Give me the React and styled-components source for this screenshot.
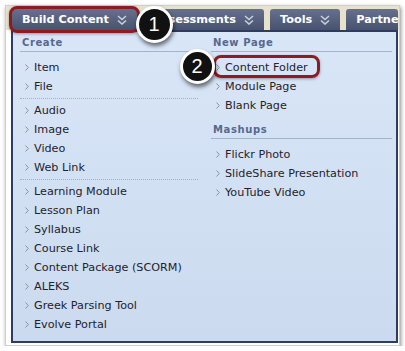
import React from "react";
import styled, { createGlobalStyle, css } from "styled-components";

const GlobalStyle = createGlobalStyle`
  body {
    margin: 0;
    background: #fff;
  }
`;

const Frame = styled.div`
  box-sizing: border-box;
  margin: 5px 0 0 5px;
  width: 395px;
  height: 341px;
  border: 1px solid #cfcfcf;
  background: #fff;
  box-shadow: 1px 2px 4px rgba(0, 0, 0, 0.45);
  display: flex;
  flex-direction: column;
  font-family: "DejaVu Sans", "Liberation Sans", sans-serif;
`;

const TabBar = styled.div`
  height: 24px;
  flex: none;
  display: flex;
  align-items: flex-end;
  gap: 6px;
  padding: 0 1px 0 6px;
  background: #e6e2cb;
`;

const highlight = css`
  &::after {
    content: "";
    position: absolute;
    border: 3px solid #8c1c22;
    border-radius: 8px;
    box-shadow: 0 1px 3px rgba(0, 0, 0, 0.35);
    z-index: 1;
    pointer-events: none;
  }
`;

const Tab = styled.div`
  position: relative;
  display: flex;
  align-items: center;
  gap: 8px;
  height: 21px;
  padding: 0 10px;
  flex: ${(p) => (p.$clip ? "1 1 auto" : "none")};
  min-width: 0;
  overflow: ${(p) => (p.$clip ? "hidden" : "visible")};
  background: linear-gradient(#66718d, #485270);
  border-radius: 3px 3px 0 0;
  color: #fff;
  font-weight: bold;
  font-size: 11.3px;
  white-space: nowrap;
  ${(p) =>
    p.$active &&
    css`
      ${highlight}
      &::after {
        inset: -3px -3px -3px -3px;
      }
    `}
`;

const Panel = styled.div`
  flex: 1;
  margin: 0 1px 2px 5px;
  border: 2px solid #2f3c62;
  background: linear-gradient(#d9e6f8, #cbdaee);
  display: grid;
  grid-template-columns: 178px 181px;
  column-gap: 13px;
  align-content: start;
  padding-left: 7px;
`;

const Column = styled.div`
  display: flex;
  flex-direction: column;
`;

const Header = styled.div`
  padding: 4px 0 1px 2px;
  margin-top: ${(p) => (p.$spaced ? "4px" : "0")};
  line-height: 14px;
  font-size: 10px;
  font-weight: bold;
  letter-spacing: 0.6px;
  color: #56698f;
  border-bottom: 1px solid #a2b3cb;
`;

const List = styled.div`
  display: flex;
  flex-direction: column;
  padding-top: 6px;
`;

const Separator = styled.div`
  margin: 2px 0;
  border-top: 1px dotted #a3b1c6;
`;

const Item = styled.div`
  position: relative;
  display: flex;
  align-items: center;
  gap: 5px;
  width: fit-content;
  height: 19px;
  padding-left: 5px;
  font-size: 11.2px;
  color: #1f232b;
  white-space: nowrap;
  ${(p) =>
    p.$active &&
    css`
      ${highlight}
      &::after {
        inset: -3px -12px -1px 2px;
      }
    `}
`;

const Badge = styled.span`
  position: absolute;
  left: ${(p) => p.$x}px;
  top: ${(p) => p.$y}px;
  width: ${(p) => p.$size}px;
  height: ${(p) => p.$size}px;
  box-sizing: border-box;
  border-radius: 50%;
  background: #111;
  border: 3px solid #fff;
  box-shadow: 1px 3px 4px rgba(0, 0, 0, 0.55);
  display: flex;
  align-items: center;
  justify-content: center;
  color: #fff;
  font-family: "Liberation Sans", Arial, sans-serif;
  font-weight: normal;
  font-size: 20px;
  z-index: 2;
`;

const DoubleChevron = () => (
  <svg width="10" height="10" viewBox="0 0 10 10">
    <g fill="none" stroke="#c9cfdc" strokeWidth="1.6">
      <polyline points="1,1 5,4.5 9,1" />
      <polyline points="1,5.5 5,9 9,5.5" />
    </g>
  </svg>
);

const Arrow = () => (
  <svg width="4" height="7" viewBox="0 0 4 7">
    <polyline points="0.5,0.5 3.3,3.5 0.5,6.5" fill="none" stroke="#8c929d" strokeWidth="1" />
  </svg>
);

const createGroups = [
  ["Item", "File"],
  ["Audio", "Image", "Video", "Web Link"],
  [
    "Learning Module",
    "Lesson Plan",
    "Syllabus",
    "Course Link",
    "Content Package (SCORM)",
    "ALEKS",
    "Greek Parsing Tool",
    "Evolve Portal",
  ],
];

const newPage = ["Content Folder", "Module Page", "Blank Page"];
const mashups = ["Flickr Photo", "SlideShare Presentation", "YouTube Video"];

const MenuItem = ({ label, active, badge }) => (
  <Item $active={active}>
    <Arrow />
    {label}
    {badge && (
      <Badge $x={-31.5} $y={-9.5} $size={35}>
        {badge}
      </Badge>
    )}
  </Item>
);

export default function App() {
  return (
    <>
      <GlobalStyle />
      <Frame>
        <TabBar>
          <Tab $active>
            Build Content <DoubleChevron />
            <Badge $x={123.5} $y={-3.5} $size={37}>
              1
            </Badge>
          </Tab>
          <Tab>
            Assessments <DoubleChevron />
          </Tab>
          <Tab>
            Tools <DoubleChevron />
          </Tab>
          <Tab $clip>Partners</Tab>
        </TabBar>
        <Panel>
          <Column>
            <Header>Create</Header>
            <List>
              {createGroups.map((group, i) => (
                <React.Fragment key={i}>
                  {i > 0 && <Separator />}
                  {group.map((label) => (
                    <MenuItem key={label} label={label} />
                  ))}
                </React.Fragment>
              ))}
            </List>
          </Column>
          <Column>
            <Header>New Page</Header>
            <List>
              {newPage.map((label, i) => (
                <MenuItem
                  key={label}
                  label={label}
                  active={i === 0}
                  badge={i === 0 ? "2" : null}
                />
              ))}
            </List>
            <Header $spaced>Mashups</Header>
            <List>
              {mashups.map((label) => (
                <MenuItem key={label} label={label} />
              ))}
            </List>
          </Column>
        </Panel>
      </Frame>
    </>
  );
}
